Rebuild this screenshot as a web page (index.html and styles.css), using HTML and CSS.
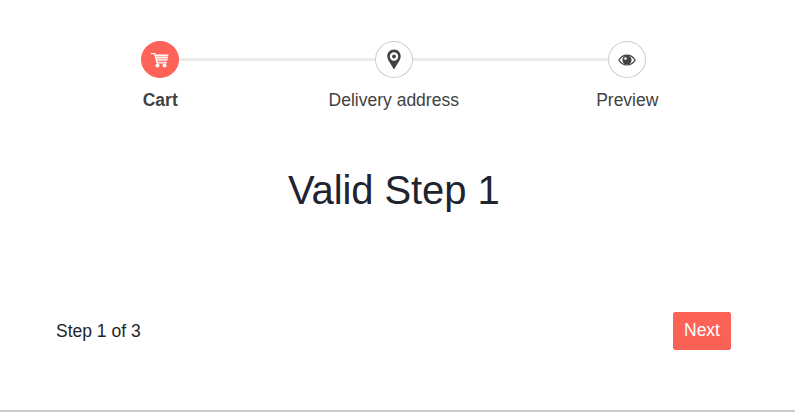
FILE: index.html
```
<!DOCTYPE html>
<html lang="en">
<head>
<meta charset="utf-8">
<title>Checkout</title>
<link rel="stylesheet" href="styles.css">
</head>
<body>
<main class="wizard">
  <ol class="stepper">
    <li class="step active">
      <span class="indicator">
        <svg width="18" height="18" viewBox="0 0 18 18" fill="currentColor"><path d="M0 2h4.2l.5 1.5h12.8l-1.4 6.7H6.4l.3 1.1h9.1v1.2H5.5L3.2 3.3H0z"/><path d="M5.2 5.4h11.7M5.7 7.4h10.8M6.1 9.2h10" stroke="#ff6358" stroke-width=".6"/><circle cx="6.5" cy="14.5" r="2"/><circle cx="13.5" cy="14.5" r="2"/></svg>
      </span>
      <span class="label">Cart</span>
    </li>
    <li class="step">
      <span class="indicator">
        <svg width="14" height="21" viewBox="0 0 14 21"><path fill="currentColor" fill-rule="evenodd" d="M7 .5C3.1.5.3 3.4.3 7.1c0 2.1.9 3.9 1.8 5.5L7 20.5l4.9-7.9c.9-1.6 1.8-3.4 1.8-5.5C13.7 3.4 10.9.5 7 .5zm0 2.8a4.2 4.2 0 1 1 0 8.4 4.2 4.2 0 0 1 0-8.4z"/><circle cx="7" cy="7.5" r="1.9" fill="currentColor"/></svg>
      </span>
      <span class="label">Delivery address</span>
    </li>
    <li class="step">
      <span class="indicator">
        <svg width="18" height="12" viewBox="0 0 18 12"><path fill="none" stroke="currentColor" stroke-width="1.2" d="M.8 6.2C2.8 3 5.5 1.2 9 1.2s6.2 1.8 8.2 5C15.2 9.3 12.5 11 9 11S2.8 9.3.8 6.2z"/><circle cx="9" cy="6" r="4.6" fill="currentColor"/><circle cx="7.5" cy="4.6" r="1.3" fill="#fff"/></svg>
      </span>
      <span class="label">Preview</span>
    </li>
  </ol>
  <h1 class="title">Valid Step 1</h1>
  <footer class="actions">
    <span>Step 1 of 3</span>
    <button class="next" type="button">Next</button>
  </footer>
</main>
</body>
</html>
```
FILE: styles.css
```
* { box-sizing: border-box; }
body {
  margin: 0;
  font: 17.5px/26px "Liberation Sans", Arial, sans-serif;
  color: #212529;
  background: #fff;
}
.wizard {
  height: 412px;
  padding-top: 41px;
  border-bottom: 2px solid #ccc;
  overflow: hidden;
}
.stepper {
  display: grid;
  grid-template-columns: repeat(3, 1fr);
  width: 700.5px;
  margin: 0 0 0 43.5px;
  padding: 0;
  list-style: none;
  color: #424242;
}
.step {
  position: relative;
  display: flex;
  flex-direction: column;
  align-items: center;
}
.step + .step::before {
  content: "";
  position: absolute;
  top: 17px;
  right: 50%;
  width: 100%;
  height: 3px;
  background: #ebebeb;
}
.indicator {
  position: relative;
  z-index: 1;
  display: flex;
  align-items: center;
  justify-content: center;
  width: 38px;
  height: 37px;
  border: 1px solid #ccc;
  border-radius: 50%;
  background: #fff;
}
.active { z-index: 1; }
.active .indicator {
  color: #fff;
  border-color: #ff6358;
  background: #ff6358;
}
.label { margin-top: 9px; }
.active .label { font-weight: bold; }
.title {
  margin: 53px 0 0 288px;
  font-size: 40px;
  line-height: 48px;
  font-weight: normal;
  letter-spacing: -0.1px;
  color: #212330;
}
.actions {
  display: flex;
  align-items: center;
  justify-content: space-between;
  margin: 98px 64px 0 56px;
}
.next {
  width: 58px;
  height: 38px;
  padding: 0 0 2px;
  border: 1px solid #fa6157;
  border-radius: 2px;
  font: inherit;
  color: #fff;
  background: linear-gradient(#ff6358, #f86056);
}
```
